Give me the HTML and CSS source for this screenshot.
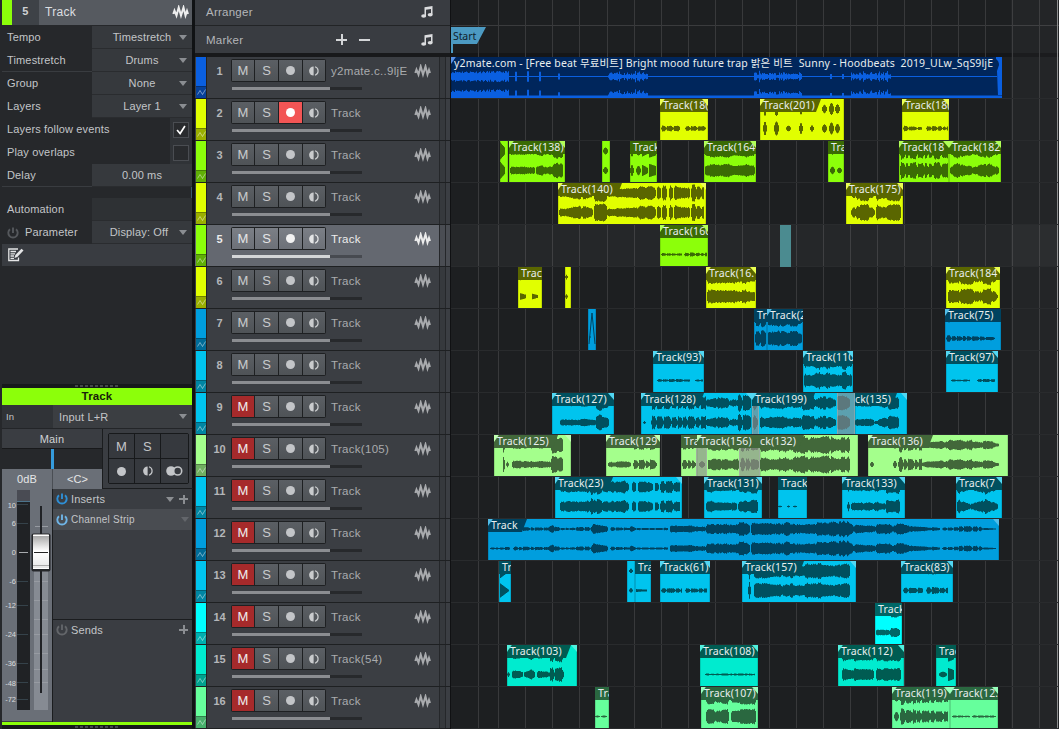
FILE: index.html
```html
<!DOCTYPE html>
<html lang="en">
<head>
<meta charset="utf-8">
<title>Arrangement</title>
<link rel="stylesheet" href="styles.css">
</head>
<body>
<svg class="defs" width="0" height="0" aria-hidden="true">
  <symbol id="wave" viewBox="0 0 16 14"><path d="M.8 9L2 5.500L4 10.500L6.200 2.500L8.500 10.500L11 2.500L13 10.500L14.500 6L15.500 9" fill="none" stroke="currentColor" stroke-width="2" stroke-miterlimit="6"/></symbol>
  <symbol id="note" viewBox="0 0 12 12"><path d="M3.500 1.200L11.500 0V8.500H10V3L5 3.800V10.500H3.500Z" fill="currentColor"/><ellipse cx="2.700" cy="10" rx="2.500" ry="1.800" fill="currentColor"/><ellipse cx="9.200" cy="8.700" rx="2.500" ry="1.800" fill="currentColor"/></symbol>
  <symbol id="half" viewBox="0 0 10 10"><path d="M4.600 .5A4.500 4.500 0 0 0 4.600 9.500Z" fill="currentColor"/><path d="M6 .8A4.400 4.400 0 0 1 6 9.200" fill="none" stroke="currentColor" stroke-width="1.200"/></symbol>
  <symbol id="power" viewBox="0 0 12 12"><path d="M3 2.200A4.700 4.700 0 1 0 9 2.200M6 .5V6" fill="none" stroke="currentColor" stroke-width="1.900"/></symbol>
  <symbol id="zig" viewBox="0 0 9 7"><path d="M.5 5.500L3 1.500L5.500 5.500L8.500 .5" fill="none" stroke="currentColor"/></symbol>
</svg>
<div class="app">
  <aside class="inspector">
    <header class="insp-head"><i class="insp-color"></i><span class="insp-num">5</span><span class="insp-name">Track</span><svg class="insp-wave"><use href="#wave"/></svg></header>
    <div class="prop"><span>Tempo</span><b>Timestretch<i class="tri"></i></b></div>
    <div class="prop ruled"><span>Timestretch</span><b>Drums<i class="tri"></i></b></div>
    <div class="prop"><span>Group</span><b>None<i class="tri"></i></b></div>
    <div class="prop"><span>Layers</span><b>Layer 1<i class="tri"></i></b></div>
    <div class="prop"><span>Layers follow events</span><em><svg class="check" viewBox="0 0 16 16"><path d="M3.500 8L7 12L12.500 3.500" fill="none" stroke="#fff" stroke-width="1.900"/></svg></em></div>
    <div class="prop"><span>Play overlaps</span><em><svg class="check" viewBox="0 0 16 16"></svg></em></div>
    <div class="prop ruled"><span>Delay</span><b class="plain">0.00 ms</b></div>
    <div class="gap"></div>
    <div class="prop"><span>Automation</span><b class="dim"></b></div>
    <div class="prop"><span class="with-icon"><svg class="pw off"><use href="#power"/></svg>Parameter</span><b class="shift">Display: Off<i class="tri"></i></b></div>
    <div class="notes"><svg width="16" height="14" viewBox="0 0 16 14"><path d="M10 1H.8V12.500H10.500V9.500M2.500 3.500H8M2.500 5.800H7M2.500 8H6M2.500 10.300H6" fill="none" stroke="#e4e5e6" stroke-width="1.300"/><path d="M6.500 10L7.300 7L13.500 .8L15.500 2.500L9.300 9Z" fill="#e4e5e6"/></svg></div>
    <div class="void"></div>
    <div class="grip"><i></i></div>
    <div class="chan-name">Track</div>
    <div class="input"><span>In</span><b>Input L+R<i class="tri"></i></b></div>
    <div class="channel">
      <div class="top">
        <div class="out"><div class="main">Main</div><div class="pan"><i></i></div><div class="vals"><span>0dB</span><span>&lt;C&gt;</span></div></div>
        <div class="keys"><div class="keygrid"><span>M</span><span>S</span><span></span><span><i class="dot"></i></span><span><svg class="half"><use href="#half"/></svg></span><span><svg width="17" height="10" viewBox="0 0 17 10"><circle cx="5" cy="5" r="4.800" fill="#c3c5c8"/><circle cx="11.700" cy="5" r="4" fill="#36393e" stroke="#c3c5c8" stroke-width="1.600"/></svg></span></div></div>
      </div>
      <div class="bottom">
        <svg class="fader" viewBox="2 489 50 232" width="50" height="232">
          <rect x="17" y="490" width="13" height="220" fill="#202225"/><rect x="17" y="490" width="13" height="11" fill="#494b53"/>
          <path d="M17 501.500H30" stroke="#4c748c"/>
          <path d="M17 504.500H28M17 523.500H28M17 581.500H28M17 605.500H28M17 634.500H28M17 663.500H28M17 682.500H28M17 699.500H28" stroke="#35424a"/>
          <path d="M19 552.500H28" stroke="#a8abae"/>
          <rect x="34" y="570" width="14" height="140" fill="#868b93"/>
          <path d="M35 526.500H48M34 581.500H48M34 600.500H48M34 619.500H48M34 634.500H48M34 653.500H48M34 669.500H48M34 682.500H48" stroke="#979ba2"/>
          <rect x="40" y="506" width="2" height="187" fill="#202226"/>
          <rect x="31.500" y="533.500" width="19" height="38" rx="2" fill="#25272a"/><rect x="33" y="534" width="16" height="35" rx="1" fill="url(#cap)"/>
          <path d="M33 535.500H49M33 568.500H49" stroke="#fff"/><path d="M34 552.500H48" stroke="#222"/><path d="M33 565.500H49" stroke="#aaa"/>
          <defs><linearGradient id="cap" x2="0" y2="1"><stop stop-color="#9d9d9d"/><stop offset=".4" stop-color="#eee"/><stop offset=".5" stop-color="#fff"/><stop offset="1" stop-color="#e6e6e6"/></linearGradient></defs>
          <g class="scale"><text x="16" y="508">10</text><text x="16" y="526">6</text><text x="16" y="555">0</text><text x="16" y="584">-6</text><text x="16" y="608">-12</text><text x="16" y="637">-24</text><text x="16" y="666">-36</text><text x="16" y="686">-48</text><text x="16" y="702">-72</text></g>
        </svg>
        <div class="racks">
          <div class="rack-head"><svg class="pw on"><use href="#power"/></svg><span>Inserts</span><i class="tri"></i><i class="plus"></i></div>
          <div class="strip-row"><svg class="pw lit"><use href="#power"/></svg><span>Channel Strip</span><i class="tri faint"></i></div>
          <div class="rack-space"></div>
          <div class="rack-head sends"><svg class="pw off2"><use href="#power"/></svg><span>Sends</span><i class="plus"></i></div>
        </div>
      </div>
    </div>
    <div class="endline"></div>
    <div class="grip low"><i></i></div>
  </aside>
  <section class="tracks">
    <div class="lane-head first"><span>Arranger</span><svg class="note"><use href="#note"/></svg></div>
    <div class="lane-head"><span>Marker</span><i class="plus big"></i><i class="minus"></i><svg class="note"><use href="#note"/></svg></div>
    <div class="sep"></div>
    <div class="list" id="list"></div>
  </section>
  <main class="timeline" id="timeline">
    <div class="rulers"><div class="ruler-a"></div><div class="ruler-b"><span class="flag"><span>Start</span></span></div></div>
    <div class="lanes" id="lanes"></div>
  </main>
</div>
<script src="app.js"></script>
</body>
</html>
```
FILE: styles.css
```css
* { box-sizing: border-box; }
body { margin: 0; background: #17181a; font: 11px "Liberation Sans", Arial, sans-serif; letter-spacing: .15px; color: #c3c5c8; overflow: hidden; }
i, em { font-style: normal; }
b { font-weight: normal; }
.defs { position: absolute; }
.app { display: flex; width: 1059px; height: 729px; }

/* Inspector */
.inspector { width: 195px; height: 729px; padding-left: 2px; border-right: 3px solid #101214; box-shadow: inset -1px 0 #3c5a6c; display: flex; flex-direction: column; flex: none; background: #26282b; position: relative; }
.insp-head { height: 26px; border-bottom: 1px solid #26282b; display: flex; align-items: center; background: #565a60; flex: none; margin-right: 0; }
.insp-color { width: 10px; height: 25px; background: #8cff0a; }
.insp-num { width: 27px; height: 25px; line-height: 23px; text-align: center; background: #3e4247; font-weight: bold; color: #d0d2d4; }
.insp-name { flex: 1; padding-left: 6px; font-size: 12px; line-height: 23px; color: #dddfe1; letter-spacing: .3px; }
.insp-wave { width: 17px; height: 14px; color: #eee; margin: 0 3px 2px 0; }
.prop { height: 23px; display: flex; align-items: stretch; justify-content: space-between; line-height: 23px; flex: none; }
.prop > span { padding-left: 5px; white-space: nowrap; }
.prop > b { width: 100px; background: #36393d; border-bottom: 1px solid #2a2c2f; text-align: center; position: relative; padding-right: 0; }
.prop > b.shift { padding-right: 6px; }
.prop > b.dim { background: #2e3134; }
.prop.ruled { box-shadow: inset 0 -1px #393c40; }
.tri { width: 0; height: 0; border: 4.500px solid transparent; border-top: 5px solid #8b8e92; border-bottom: 0; }
.prop .tri, .input .tri { position: absolute; right: 5px; top: 9px; }
.prop > em { width: 22px; background: #303337; display: grid; place-items: center; }
.check { width: 16px; height: 16px; border: 1px solid #4a4d52; background: #292b2e; display: block; }
.gap { height: 11px; flex: none; }
.with-icon { display: flex; align-items: center; gap: 6px; }
.pw { width: 12px; height: 12px; display: block; }
.off { color: #55585c; }
.off2 { color: #63666a; }
.on { color: #2e8fd6; }
.lit { color: #6fb4e6; }
.notes { height: 22px; background: #393c41; padding: 4px 6px; flex: none; }
.void { flex: 1; background: #26282b; }
.grip { height: 4px; background: #17191b; display: flex; justify-content: center; align-items: flex-start; flex: none; padding-top: 1px; }
.grip i { width: 44px; height: 2px; background: repeating-linear-gradient(90deg, #44474a 0 3px, #17191b 3px 5px); }
.chan-name { height: 17px; background: #8cff0a; color: #18210a; font-weight: bold; font-size: 11.500px; text-align: center; line-height: 17px; flex: none; }
.input { height: 24px; display: flex; line-height: 24px; flex: none; border-bottom: 1px solid #232528; }
.input > span { width: 51px; padding-left: 4px; font-size: 9.500px; background: #303337; }
.input > b { flex: 1; background: #3b3e42; padding-left: 6px; position: relative; }
.channel { height: 293px; display: flex; flex-direction: column; flex: none; background: #3a3d42; }
.top { display: flex; height: 60px; flex: none; }
.out { width: 101px; border-right: 1px solid #1b1d1f; }
.main { height: 20px; text-align: center; line-height: 20px; border-bottom: 1px solid #18191b; color: #d0d2d4; }
.pan { height: 20px; background: #26282b; display: flex; justify-content: center; }
.pan i { width: 3px; height: 20px; background: #359bdc; }
.vals { height: 20px; display: grid; grid-template-columns: 50px 50px; background: #6a6f77; text-align: center; line-height: 20px; color: #e6e7e8; }
.vals span + span { border-left: 1px solid #4a4e54; }
.keys { flex: 1; padding: 4px 4px 0 5px; border-bottom: 1px solid #1b1d1f; }
.keygrid { width: 81px; height: 51px; display: grid; grid-template: 24px 24px / 25px 25px 27px; gap: 1px; border: 1px solid #17191b; background: #17191b; border-radius: 2px; }
.keygrid > span { display: grid; place-items: center; background: #36393e; font-size: 13px; }
.dot { width: 9px; height: 9px; border-radius: 50%; background: #c3c5c8; display: block; }
.half { width: 10px; height: 10px; display: block; }
.bottom { display: flex; height: 233px; }
.fader { background: #6a6f77; flex: none; height: 232px; }
.scale { font-size: 7.500px; fill: #d9dbdd; text-anchor: end; letter-spacing: 0; }
.racks { flex: 1; border-left: 1px solid #1b1d1f; display: flex; flex-direction: column; }
.rack-head { height: 20px; display: flex; align-items: center; padding: 0 4px 0 3px; gap: 3px; flex: none; font-size: 11px; }
.rack-head .tri { margin-right: 2px; }
.rack-head span, .strip-row span { flex: 1; }
.strip-row { height: 21px; background: #494c51; display: flex; align-items: center; gap: 3px; padding: 0 3px; font-size: 10px; flex: none; letter-spacing: .25px; }
.faint { border-top-color: #63666b; }
.plus { width: 9px; height: 9px; background: linear-gradient(#8b8e92, #8b8e92) 50% 50% / 9px 2px no-repeat, linear-gradient(#8b8e92, #8b8e92) 50% 50% / 2px 9px no-repeat; }
.plus.big { width: 11px; height: 11px; background: linear-gradient(#d4d6d8, #d4d6d8) 50% 50% / 11px 2px no-repeat, linear-gradient(#d4d6d8, #d4d6d8) 50% 50% / 2px 11px no-repeat; }
.minus { width: 11px; height: 2px; background: #d4d6d8; }
.rack-space { height: 89px; flex: none; }
.sends { border-top: 1px solid #1b1d1f; }
.endline { height: 3px; background: #8cff0a; flex: none; }

/* Track list */
.tracks { width: 256px; display: flex; flex-direction: column; flex: none; border-right: 1px solid #101113; }
.lane-head { height: 27px; background: #393c41; display: flex; align-items: center; padding: 0 17px 0 11px; font-size: 11.500px; color: #b4b6b9; letter-spacing: .25px; }
.lane-head.first { height: 26px; border-bottom: 1px solid #222426; padding-bottom: 2px; }
.lane-head span { width: 130px; }
.lane-head .minus { margin-left: 12px; }
.note { width: 12px; height: 12px; margin-left: auto; color: #dcdddf; }
.sep { height: 4px; background: #18191b; flex: none; }
.track { display: flex; height: 42px; background: #3b3e43; border-bottom: 1px solid #1e2022; }
.swatch { width: 11px; margin-left: 1px; display: flex; flex-direction: column; justify-content: flex-end; border-right: 1px solid #222; flex: none; }
.swatch span { height: 12px; border-top: 1px solid #0004; background: #00000050; color: #ffffff70; display: grid; place-items: center; }
.swatch svg { width: 9px; height: 7px; }
.num { width: 25px; text-align: center; font-weight: bold; line-height: 28px; color: #b4b6b9; letter-spacing: 0; }
.ctl { padding-top: 2px; width: 96px; }
.btns { display: grid; grid-template-columns: 22px 23px 23px 22px; gap: 1px; padding: 1px; background: #1e2022; height: 23px; width: 95px; border-radius: 2px; margin-left: -1px; }
.btns span { background: linear-gradient(#5b5f64, #4f5357); display: grid; place-items: center; font-size: 13px; letter-spacing: 0; color: #c9cbcd; }
.btns .muted { background: #a62a2b; color: #eee; }
.btns .armed { background: #f25555; }
.armed .dot { background: #fff; }
.vol { width: 130px; height: 3px; margin-top: 5px; background: linear-gradient(90deg, #8b8d91 98px, #27292c 98px); }
.name { flex: 1; line-height: 29px; font-size: 11.500px; letter-spacing: .3px; padding-left: 3px; color: #a9abae; white-space: nowrap; }
.kind { width: 17px; height: 14px; margin: 7px 8px 0 0; color: #a9abae; flex: none; }
.meter { width: 11px; border-left: 1px solid #25272a; flex: none; display: flex; justify-content: flex-end; background: #36393d; }
.meter i { width: 5px; border-left: 1px solid #25272a; background: #3b3e43; }
.track.sel { background: #646870; }
.sel .btns span { background: linear-gradient(#7b7f86, #6d7178); color: #e4e5e6; }
.sel .dot { background: #f2f2f2; }
.sel .name, .sel .num, .sel .kind { color: #ececec; }
.sel .vol { background: linear-gradient(90deg, #d4d6d8 98px, #474a50 98px); }
.sel .meter, .sel .meter i { background: #4a4d53; }

/* Timeline */
.timeline { flex: 1; position: relative; background: #1d1f21; overflow: hidden; }
.rulers { height: 57px; border-bottom: 4px solid #151618; }
.ruler-a { height: 26px; border-bottom: 1px solid #3a3b3d; }
.ruler-b { padding-top: 1px; }
.flag { display: block; width: 35px; height: 26px; background: #4c9ac2; clip-path: polygon(0 0, 100% 0, 26px 17px, 2px 17px, 2px 100%, 0 100%); position: relative; z-index: 2; }
.flag span { display: block; padding-left: 2px; color: #10222c; font: 10.500px/18px "Noto Sans", sans-serif; letter-spacing: -.1px; }
.lane { height: 42px; position: relative; border-bottom: 1px solid #292b2d; }
.lane.sel { background: #ffffff0a; }
.beyond { position: absolute; left: 560px; right: 0; top: 0; bottom: 0; background: #ffffff07; }
.edge { position: absolute; left: 606px; width: 1px; top: 0; bottom: 0; background: #8e8f90; }
.grid { position: absolute; width: 1px; top: 0; bottom: 0; background: #38393b; }
.clip { position: absolute; top: 0; height: 41px; overflow: hidden; font: 10.500px/12px "Noto Sans", "Noto Sans CJK KR", sans-serif; letter-spacing: .15px; color: #e9eeee; box-shadow: inset 1px 0 #0002, inset -1px 0 #0002; }
.clip > svg { position: absolute; left: 0; top: 0; }
.tag { position: absolute; left: 0; top: 0; height: 13px; padding-left: 3px; white-space: pre; overflow: hidden; z-index: 2; }
.tag.flush { padding-left: 0; }
.tag.cut { clip-path: polygon(0 0, 100% 0, calc(100% - 5px) 100%, 0 100%); }
.tag.wide { letter-spacing: .16px; }
.cl, .cr { position: absolute; top: 0; width: 6px; height: 7px; background: color-mix(in srgb, var(--lite) 68%, #fff); z-index: 3; }
.cl { left: 0; clip-path: polygon(0 0, 80% 0, 0 100%); }
.cr { right: 0; clip-path: polygon(0 0, 100% 0, 100% 100%); }
.overlap { position: absolute; top: 0; height: 41px; background: #8d8d8da6; border: solid #b0b4b480; border-width: 0 1px; }
.range { position: absolute; top: 0; height: 42px; background: #4b8b90; }
```
FILE: app.js
```js
const C = {
  blue: ['#0a5fe0', '#00265c'], yel: ['#e1ff00', '#5a6600'], grn: ['#8cff0a', '#3a6b04'],
  sky: ['#009ede', '#00425f'], cya: ['#00c4ee', '#00505f'], lgr: ['#a4ff8c', '#42683a'],
  aqu: ['#00ffff', '#006666'], tea: ['#00ebcf', '#005c52'], spr: ['#66ff9c', '#2a6840']
};
// Track: colour, name, muted
const tracks = [
  ['blue', 'y2mate.c..9ljE'], ['yel', 'Track'], ['grn', 'Track'], ['yel', 'Track'], ['grn', 'Track'],
  ['yel', 'Track'], ['sky', 'Track'], ['cya', 'Track'], ['cya', 'Track', 1], ['lgr', 'Track(105)', 1],
  ['cya', 'Track', 1], ['sky', 'Track', 1], ['cya', 'Track', 1], ['aqu', 'Track', 1], ['tea', 'Track(54)', 1], ['spr', 'Track', 1]
];
// Clip: start, end, label, tag width (0 = full), corners, envelope [from, to, level a, level b, kind]
// kinds: n noisy, b blobs, d dense with narrow gaps, o single swell
const clips = [
  [[451, 1002, 'y2mate.com - [Free beat 무료비트] Bright mood future trap 밝은 비트  Sunny - Hoodbeats  2019_ULw_SqS9ljE', 0, 'l', []]],
  [[660, 708, 'Track(18(', 0, 'lr', [[1, 20, .3, .3, 'b'], [25, 46, .25, .25, 'b']]],
   [760, 844, 'Track(201)', 61, 'l', [[3, 7, .75, .75, 'o'], [14, 19, .75, .75, 'o'], [26, 31, .3, .3, 'o'], [39, 43, .6, .6, 'o'], [50, 54, .35, .35, 'o'], [62, 67, .45, .45, 'o'], [69, 74, .65, .65, 'o'], [75, 80, .5, .5, 'o']]],
   [902, 949, 'Track(18(', 0, 'lr', [[1, 20, .3, .2, 'b'], [24, 46, .25, .25, 'b']]]],
  [[500, 508, '', 0, '', [[0, 5, .9, .4, 'o']]],
   [509, 565, 'Track(138)', 0, 'lr', [[1, 26, .45, .55, 'n'], [27, 46, .5, .75, 'n'], [44, 54, .9, .9, 'n']]],
   [602, 610, '', 0, '', [[1, 6, .35, .4, 'o']]],
   [630, 657, 'Track', 0, '', [[0, 4, .6, .6, 'o'], [6, 11, .5, .5, 'o'], [12, 18, .6, .3, 'o'], [19, 26, .7, .5, 'o']]],
   [704, 756, 'Track(164', 0, 'lr', [[1, 51, .75, .75, 'n']]],
   [828, 844, 'Tra', 0, '', [[2, 7, .4, .4, 'o'], [9, 14, .3, .3, 'o']]],
   [899, 949, 'Track(18', 0, 'lr', [[1, 49, .9, .9, 'd']]],
   [949, 1001, 'Track(182', 0, 'lr', [[1, 12, .45, .9, 'n'], [12, 24, .9, .5, 'n'], [24, 38, .5, .95, 'n'], [38, 50, .9, .45, 'n']]]],
  [[558, 706, 'Track(140)', 64, 'lr', [[1, 24, .45, .8, 'n'], [24, 35, .8, .6, 'n'], [36, 49, .95, .95, 'n'], [49, 80, .45, .8, 'n'], [80, 98, .85, .7, 'n'], [99, 103, .9, .9, 'n'], [104, 109, .9, .9, 'n'], [111, 115, .8, .8, 'n'], [116, 132, .9, .85, 'n'], [133, 146, .9, .85, 'd']]],
   [846, 903, 'Track(175)', 0, 'lr', [[5, 10, .4, .9, 'n'], [10, 24, .85, .9, 'n'], [24, 29, .8, .4, 'n'], [30, 55, .9, .85, 'n']]]],
  [[660, 708, 'Track(160', 0, 'lr', [[1, 22, .16, .16, 'b'], [24, 47, .2, .2, 'b']]]],
  [[518, 542, 'Trac', 0, '', [[2, 8, .35, .2, 'o'], [14, 20, .3, .15, 'o']]],
   [565, 571, '', 0, '', [[0, 3, .25, .25, 'o']]],
   [706, 756, 'Track(16.', 0, 'lr', [[1, 49, .8, .8, 'n']]],
   [946, 1000, 'Track(184', 0, 'lr', [[2, 14, .75, .85, 'n'], [14, 28, .85, .95, 'n'], [28, 36, .6, .6, 'n'], [36, 46, .8, 1, 'n'], [46, 52, .8, .3, 'n']]]],
  [[588, 596, '', 0, '', []], [754, 767, 'Tr', 0, '', [[1, 12, .85, .85, 'd']]],
   [767, 803, 'Track(2', 0, 'l', [[1, 35, .85, .95, 'n']]],
   [945, 1001, 'Track(75)', 0, 'l', [[1, 50, .35, .2, 'b']]]],
  [[653, 704, 'Track(93)', 0, 'lr', [[4, 37, .15, .15, 'b'], [42, 50, .1, .1, 'b']]],
   [803, 853, 'Track(110', 0, 'lr', [[1, 49, .9, .95, 'n']]],
   [946, 998, 'Track(97)', 0, 'lr', [[5, 24, .1, .1, 'b'], [31, 49, .15, .15, 'b']]]],
  [[552, 614, 'Track(127)', 0, 'lr', [[8, 44, .35, .5, 'n'], [44, 57, 1, .6, 'n']]],
   [641, 752, 'Track(128)', 63, 'lr', [[2, 5, .15, .15, 'o'], [10, 65, .7, .7, 'b'], [65, 76, .4, .6, 'n'], [76, 88, .75, .6, 'n'], [88, 96, .3, .5, 'n'], [96, 110, .9, .8, 'b']]],
   [752, 855, 'Track(199)', 63, 'l', [[1, 6, .9, .7, 'n'], [8, 50, .7, .65, 'n'], [50, 63, .95, .75, 'n'], [63, 70, .5, .95, 'n'], [70, 84, .9, .5, 'n'], [85, 98, .95, .6, 'n']]],
   [855, 907, 'ck(135)', 42, 'r', [[0, 19, .4, .45, 'n'], [19, 23, .15, .25, 'n'], [23, 33, .4, .6, 'n'], [33, 44, .85, .7, 'n']]]],
  [[494, 571, 'Track(125)', 64, 'lr', [[9, 11, .8, .5, 'o'], [12, 15, .3, .3, 'o'], [18, 57, .45, .45, 'n'], [57, 69, 1, .8, 'n']]],
   [606, 660, 'Track(129', 0, 'lr', [[2, 25, .3, .35, 'n'], [27, 51, .5, .5, 'b']]],
   [681, 697, 'Tra', 0, '', [[1, 15, .5, .5, 'b']]],
   [697, 760, 'Track(156)', 0, 'l', [[2, 8, .35, .35, 'o'], [11, 42, .7, .6, 'n'], [43, 62, .7, .6, 'b']]],
   [760, 858, 'ck(132)', 44, 'flush', [[0, 70, .85, .95, 'n'], [70, 90, 1, .95, 'n']]],
   [868, 1008, 'Track(136)', 65, 'l', [[2, 6, .3, .3, 'o'], [25, 29, .4, .4, 'o'], [30, 54, .8, .6, 'b'], [54, 80, .3, .5, 'n'], [80, 98, .65, .6, 'n'], [98, 115, .6, .4, 'n'], [115, 131, .75, .25, 'n']]]],
  [[555, 682, 'Track(23)', 58, 'lr', [[5, 35, .6, .7, 'n'], [35, 48, .95, .8, 'n'], [48, 74, .85, .65, 'n'], [77, 81, .65, .65, 'n'], [83, 98, .7, .6, 'n'], [100, 104, .6, .4, 'n'], [105, 125, .6, .65, 'd']]],
   [704, 762, 'Track(131)', 0, 'lr', [[2, 33, .6, .6, 'n'], [34, 54, .6, .75, 'n']]],
   [778, 807, 'Track', 0, '', [[0, 4, .08, .08, 'o'], [9, 12, .1, .1, 'o'], [15, 19, .08, .08, 'o']]],
   [842, 905, 'Track(133)', 0, 'lr', [[5, 8, .5, .5, 'o'], [9, 44, .45, .5, 'n'], [44, 58, .9, .8, 'n']]],
   [956, 1002, 'Track(7', 0, 'lr', [[1, 14, .75, .5, 'n'], [14, 28, .3, .75, 'n'], [28, 42, .9, .4, 'n']]]],
  [[488, 999, 'Track', 39, 'lr', [[2, 22, .1, .15, 'b'], [25, 60, .2, .15, 'b'], [60, 66, .25, .45, 'n'], [66, 72, .35, .2, 'n'], [72, 104, .12, .25, 'b'], [104, 120, .6, .35, 'n'], [122, 142, .2, .12, 'b'], [142, 148, .4, .15, 'n'], [148, 180, .12, .12, 'b'], [182, 218, .45, .4, 'n'], [218, 250, .6, .65, 'n'], [250, 257, .8, 1, 'n'], [257, 262, 1, .7, 'n'], [263, 308, .7, .75, 'n'], [308, 328, .6, .6, 'n'], [328, 350, .8, .9, 'n'], [350, 358, .9, 1, 'n'], [358, 366, 1, .5, 'n'], [366, 388, .5, .35, 'n'], [388, 408, .6, .5, 'n'], [408, 422, .7, .5, 'n'], [422, 452, .35, .15, 'n'], [454, 470, .15, .2, 'b'], [470, 495, .3, .3, 'b'], [495, 508, .15, .1, 'n']]]],
  [[499, 511, 'Tr', 0, '', [[1, 10, .75, .1, 'o']]], [627, 635, '', 0, '', [[2, 6, .25, .25, 'o']]],
   [635, 651, 'Tra', 0, '', [[1, 12, .15, .1, 'o']]],
   [660, 710, 'Track(61)', 0, 'lr', [[1, 22, .25, .25, 'b'], [25, 47, .25, .25, 'b']]],
   [742, 856, 'Track(157)', 62, 'lr', [[6, 9, .9, .9, 'o'], [12, 40, .9, .7, 'n'], [40, 62, .7, .85, 'n'], [62, 108, .9, .9, 'n']]],
   [901, 953, 'Track(83)', 0, 'lr', [[2, 22, .3, .3, 'b'], [25, 47, .35, .35, 'b']]]],
  [[875, 902, 'Track', 0, '', [[1, 15, .35, .4, 'n'], [15, 20, .5, .9, 'n'], [20, 25, .8, .5, 'n']]]],
  [[507, 577, 'Track(103)', 64, 'lr', [[0, 3, .25, .25, 'o'], [5, 16, .5, .5, 'n'], [17, 28, .4, .55, 'n'], [30, 42, .4, .5, 'n'], [42, 57, .7, .85, 'b']]],
   [700, 758, 'Track(108)', 0, 'lr', [[5, 55, .1, .12, 'b']]],
   [838, 904, 'Track(112)', 0, 'lr', [[4, 36, .7, .65, 'n'], [38, 63, .7, .75, 'n']]],
   [936, 956, 'Trac', 0, '', [[3, 11, .3, .3, 'o'], [12, 18, .7, .5, 'o']]]],
  [[595, 609, 'Tra', 0, '', [[0, 5, .1, .1, 'o'], [6, 12, .1, .1, 'o']]],
   [701, 758, 'Track(107)', 0, 'lr', [[5, 28, .75, .8, 'n'], [30, 55, .75, .8, 'n']]],
   [892, 950, 'Track(119)', 0, 'lr', [[2, 7, .5, .5, 'o'], [8, 24, .85, .8, 'd'], [24, 56, .65, .65, 'd']]],
   [950, 998, 'Track(12.', 0, 'lr', [[2, 20, .12, .1, 'b'], [22, 46, .12, .12, 'b']]]]
];
const overlaps = { 8: [[752, 759], [837, 855]], 9: [[696, 707], [739, 760]] };

let seed = 11;
const rnd = () => (seed = (seed * 16807) % 2147483647) / 2147483647;

function levels(width, env) {
  const out = new Array(width).fill(0);
  for (const [from, to, a, b, kind] of env) {
    let blob = 5, at = 0, peak = 1, drift = .85, goal = .85;
    for (let x = from; x < Math.min(to, width); x++) {
      const t = (x - from) / Math.max(1, to - from - 1);
      let v = a + (b - a) * t;
      if (kind === 'o') v *= a > b ? 1 : Math.sin(Math.PI * (t * .7 + .15));
      else if (kind === 'n') {
        if (rnd() < .3) goal = .58 + rnd() * .44;
        drift += (goal - drift) * .6;
        v *= drift + (rnd() - .5) * .16;
        if (x === from || x === to - 1) v *= .75;
      } else {
        if (at >= blob) { at = 0; blob = 4 + Math.floor(rnd() * 6); peak = .75 + rnd() * .3; }
        const edge = at === 0 ? (kind === 'd' ? .55 : .35) : at === blob - 1 ? .7 : 1;
        v *= edge * peak * (.85 + rnd() * .2);
        at++;
      }
      out[x] = Math.min(1, v);
    }
  }
  return out;
}
function wavePath(width, env) {
  const lv = levels(width, env);
  let d = '';
  for (const mid of [10, 29.5]) {
    lv.forEach((v, x) => {
      if (v > 0) { const h = Math.max(.5, v * 9.3); d += `M${x} ${(mid - h).toFixed(1)}h1v${(h * 2).toFixed(1)}h-1z`; }
    });
  }
  return d;
}
// Stereo mixdown: loud throughout, bright shows only between the two channels
function mixPath() {
  const bursts = [[0, 58, .85], [64, 66, .9], [76, 78, 1], [88, 90, .9], [107, 109, .6], [157, 197, .8], [303, 351, .8], [379, 381, .5], [391, 393, .5], [400, 440, .8]];
  let d = 'M0 19h546v1h-546zM0 38.500h551v3h-551zM545 2q3 2 3 6l-2 6l1 25h4v-39h-6z';
  for (const [a, b, v] of bursts) for (let x = a; x < b; x++) {
    const h = (a === 0 ? .6 + rnd() * .4 : b - a < 4 ? .8 : .25 + rnd() * (x % 4 === 0 ? .9 : .5)) * v * 6.5;
    d += `M${x} ${(19.5 - h).toFixed(1)}h1v${(h * 2).toFixed(1)}h-1zM${x} ${(39 - h * 1.2).toFixed(1)}h1V39h-1z`;
  }
  return d;
}
document.getElementById('list').innerHTML = tracks.map(([c, name, muted], i) => `
  <div class="track${i === 4 ? ' sel' : ''}">
    <div class="swatch" style="background:${C[c][0]}"><span><svg><use href="#zig"/></svg></span></div>
    <div class="num">${i + 1}</div>
    <div class="ctl"><div class="btns"><span class="${muted ? 'muted' : ''}">M</span><span>S</span><span class="${i === 1 ? 'armed' : ''}"><i class="dot"></i></span><span><svg class="half"><use href="#half"/></svg></span></div><div class="vol"></div></div>
    <div class="name">${name}</div><svg class="kind"><use href="#wave"/></svg><div class="meter"><i></i></div>
  </div>`).join('');

const X0 = 451;
document.getElementById('lanes').innerHTML = clips.map((row, i) => {
  const [lite, dark] = C[tracks[i][0]];
  let h = row.map(([a, b, label, tag, corners, env]) => {
    const w = b - a, mix = i === 0;
    const path = mix ? mixPath() : wavePath(w, env);
    const spike = i === 6 && a === 588 ? '<path d="M1 35L4 4L7 35M1 28H3" fill="none" stroke="#00425f"/>' : '';
    const flush = corners === 'flush';
    return `<div class="clip" style="left:${a - X0}px;width:${w}px;background:${mix ? dark : lite};--lite:${lite}">
      <svg width="${w}" height="41"><path d="${path}" fill="${mix ? lite : dark}"/>${spike}</svg>
      ${label ? `<div class="tag${tag ? ' cut' : ''}${mix ? ' wide' : ''}${label.startsWith('ck') ? ' flush' : ''}" style="width:${tag || w}px;background:${mix ? 'none' : dark}">${label}</div>` : ''}
      ${!flush && corners.includes('l') ? '<i class="cl"></i>' : ''}${!flush && corners.includes('r') ? '<i class="cr"></i>' : ''}</div>`;
  }).join('');
  for (const [a, b] of overlaps[i] || []) h += `<div class="overlap" style="left:${a - X0}px;width:${b - a}px"></div>`;
  if (i === 4) h += `<div class="range" style="left:${780 - X0}px;width:11px"></div>`;
  return `<div class="lane${i === 4 ? ' sel' : ''}">${h}</div>`;
}).join('');

const grid = [478, 498, 525, 552, 579];
for (let x = 607; x < 1050; x += 27) grid.push(x);
const back = document.createDocumentFragment();
for (const x of grid) {
  const g = document.createElement('i');
  g.className = 'grid';
  g.style.left = x - X0 + 'px';
  back.append(g);
}
for (const c of ['beyond', 'edge']) { const e = document.createElement('i'); e.className = c; back.append(e); }
document.getElementById('timeline').prepend(back);
```
